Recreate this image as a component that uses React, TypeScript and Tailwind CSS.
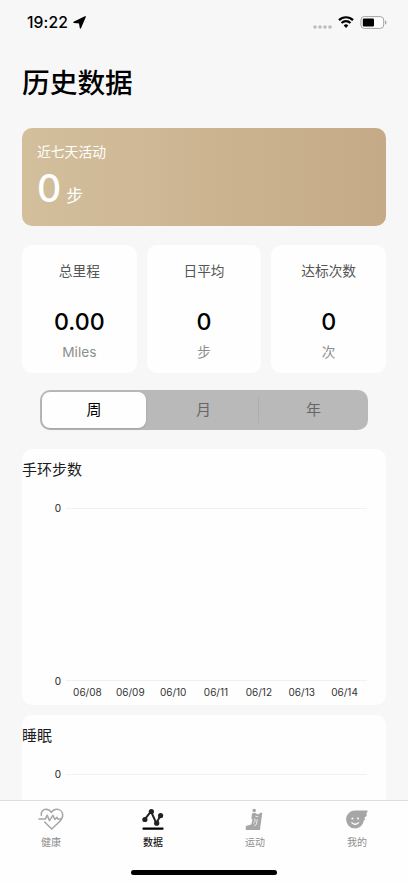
import React from "react";

const stats = [
  { label: "总里程", value: "0.00", unit: "Miles" },
  { label: "日平均", value: "0", unit: "步" },
  { label: "达标次数", value: "0", unit: "次" },
];

const days = ["06/08", "06/09", "06/10", "06/11", "06/12", "06/13", "06/14"];

const StatusBar: React.FC = () => (
  <header className="flex h-[46px] shrink-0 items-center justify-between pl-[27px] pr-[21px]">
    <div className="flex items-center gap-[5px]">
      <span className="text-[15.7px] leading-5 font-medium tracking-[0.1px]">19:22</span>
      <svg width="13" height="13" viewBox="0 0 13 13" className="-mt-[2px]">
        <path d="M12.2.8 7.4 12 6.6 6.9.9 6.3z" fill="#000" stroke="#000" strokeWidth="1.3" strokeLinejoin="round" />
      </svg>
    </div>
    <div className="flex items-center">
      <svg width="19" height="4" viewBox="0 0 19 4" className="mt-[7px] mr-[6px]" fill="#bdbdbd">
        <circle cx="2" cy="2" r="1.8" />
        <circle cx="7" cy="2" r="1.8" />
        <circle cx="12" cy="2" r="1.8" />
        <circle cx="17" cy="2" r="1.8" />
      </svg>
      <svg width="16" height="12" viewBox="0 0 16 12" fill="none" stroke="#000" className="-mt-[2px]">
        <path d="M1 4.1a10 10 0 0 1 14 0" strokeWidth="2.2" />
        <path d="M3.5 7a6.4 6.4 0 0 1 9 0" strokeWidth="2.1" />
        <path d="M8 11.9 5.7 9.4a3.3 3.3 0 0 1 4.6 0z" fill="#000" stroke="none" />
      </svg>
      <svg width="27" height="13" viewBox="0 0 27 13" className="-mt-[2px] ml-[6px]">
        <rect x=".9" y=".6" width="22.8" height="11.8" rx="3.4" fill="#fdfdfd" stroke="#a3a3a3" />
        <rect x="2.8" y="2.5" width="11.2" height="8" rx="1.2" fill="#000" />
        <path d="M25 4.3q3 2.2 0 4.4z" fill="#a3a3a3" />
      </svg>
    </div>
  </header>
);

const ChartCard: React.FC<{ title: string; labels?: string[] }> = ({ title, labels }) => (
  <section className="h-64 shrink-0 rounded-[10px] bg-[#fefefe]">
    <h2 className="pt-[10px] text-[15px] leading-[22px] text-[#1c1c1c]">{title}</h2>
    <div className="mt-[27px] flex h-[173px] pr-[19px]">
      <div className="-my-[6px] flex w-[39px] flex-col justify-between text-right text-[10px] leading-3 text-[#222]">
        <span>0</span>
        {labels && <span>0</span>}
      </div>
      <div className="ml-[5px] flex-1 border-y border-[#f1f1f1]" />
    </div>
    {labels && (
      <div className="mt-1 ml-[44px] grid w-[300px] grid-cols-7 text-center text-[10px] leading-[14px] text-[#333]">
        {labels.map((day) => (
          <span key={day}>{day}</span>
        ))}
      </div>
    )}
  </section>
);

const HealthIcon: React.FC = () => (
  <svg width="26" height="24" viewBox="0 0 26 24" fill="none" stroke="#a6a6a6" strokeWidth="1.5" strokeLinecap="round" strokeLinejoin="round">
    <path d="M3.4 8.3C2.7 4.8 5 2.3 8 2.3c2.1 0 3.9 1.1 5.3 3.1 1.3-2 3.2-3.1 5.4-3.1 3.4 0 6 2.5 6 6 0 2.5-1.3 4.5-3.5 6.7L13.7 22l-7-7" />
    <path d="M1 12.1h6.3l1.9-3.9 2.3 5.4 3.4-5.2 1.9 4.1 2.2-2.3.8 1.9h3.6" />
  </svg>
);

const DataIcon: React.FC = () => (
  <svg width="24" height="24" viewBox="0 0 24 24">
    <path d="M3.5 12.6 10 4.4l5.4 12 4-8" fill="none" stroke="#222" strokeWidth="2" />
    <g fill="#222">
      <circle cx="3.9" cy="12.5" r="2.6" />
      <circle cx="10.4" cy="4.6" r="2.6" />
      <circle cx="15.7" cy="16.2" r="2.6" />
      <circle cx="19.6" cy="8.6" r="2.6" />
    </g>
    <rect x="1.5" y="20.4" width="21" height="2.3" rx=".6" fill="#000" />
  </svg>
);

const SportIcon: React.FC = () => (
  <svg width="24" height="24" viewBox="0 0 24 24" fill="#a6a6a6">
    <circle cx="11.2" cy="3.5" r="1.8" />
    <path d="m8.9 6.6 3.1-.9 2.4 1.6 2.2-.4V5.8h2.7l-2.4 17.1H2.8V19l5.5-1.4 1.3-5.6-1.2.3z" />
    <path d="m12.3 9.2 2.9.6M10.2 16.4l1.9-1.8-.2-3M11.1 18.9l2.3-1.5.9-5.2" fill="none" stroke="#fefefe" strokeWidth=".8" />
  </svg>
);

const MineIcon: React.FC = () => (
  <svg width="24" height="24" viewBox="0 0 24 24">
    <path d="M10 3.6h11.7c.9 0 1.3.7.7 1.4l-.9 1.1.2 3-2 1.1.1 2.8-1 .6A8.9 8.9 0 1 1 10 3.6z" fill="#a6a6a6" />
    <circle cx="7.4" cy="11.6" r="1" fill="#fff" />
    <circle cx="13" cy="11.6" r="1" fill="#fff" />
    <path d="M6.8 15.6q3.4 3.3 6.8 0" fill="none" stroke="#fff" strokeWidth="1.2" strokeLinecap="round" />
  </svg>
);

const tabs = [
  { label: "健康", icon: <HealthIcon /> },
  { label: "数据", icon: <DataIcon />, active: true },
  { label: "运动", icon: <SportIcon /> },
  { label: "我的", icon: <MineIcon /> },
];

export default function App() {
  return (
    <div className="flex h-[883px] w-[408px] flex-col overflow-hidden bg-[#f7f7f7] font-['Inter','Noto_Sans_CJK_SC',sans-serif] text-black">
      <StatusBar />
      <main className="flex min-h-0 flex-1 flex-col overflow-hidden px-[22px]">
        <h1 className="mt-[17px] h-10 shrink-0 text-[27.7px] leading-10 font-medium">历史数据</h1>

        <section className="mt-[25px] h-[98px] shrink-0 rounded-[10px] bg-linear-to-r from-[#d3bf9c] to-[#c5aa87] px-[15px] pt-[14px] text-white">
          <p className="text-[13.8px] leading-5">近七天活动</p>
          <p className="mt-[6px] flex items-baseline gap-[5px] leading-[42px]">
            <span className="text-[37.5px] font-medium">0</span>
            <span className="text-[17px]">步</span>
          </p>
        </section>

        <section className="mt-[19px] grid h-32 shrink-0 grid-cols-3 gap-[10px] text-center">
          {stats.map((s) => (
            <div key={s.label} className="rounded-[10px] bg-[#fefefe] pt-4">
              <p className="text-[13.7px] leading-5 text-[#555]">{s.label}</p>
              <p className="mt-[26px] text-[23.2px] leading-[30px] font-medium">{s.value}</p>
              <p className="mt-[5px] text-[13.7px] leading-5 text-[#8e8e8e]">{s.unit}</p>
            </div>
          ))}
        </section>

        <div className="mx-[18px] mt-[17px] flex h-10 shrink-0 items-center rounded-[10px] bg-[#b9b9b9] p-[2px] text-center text-[15px] text-[#666]">
          <span className="h-9 w-[104px] rounded-[8px] bg-[#fefefe] leading-9 text-black shadow-sm">周</span>
          <span className="w-28 pl-[3px] leading-9">月</span>
          <span className="h-[26px] w-px bg-[#adadad]" />
          <span className="flex-1 pl-[2px] leading-9">年</span>
        </div>

        <div className="mt-[19px] flex flex-col gap-[10px]">
          <ChartCard title="手环步数" labels={days} />
          <ChartCard title="睡眠" />
        </div>
      </main>

      <nav className="h-[83px] shrink-0 border-t border-[#dedede] bg-[#fefefe]">
        <div className="grid h-[71px] grid-cols-4 pt-[6px]">
          {tabs.map((tab) => (
            <div key={tab.label} className="flex flex-col items-center">
              {tab.icon}
              <span
                className={
                  tab.active
                    ? "mt-[3px] text-[10px] leading-4 font-medium text-[#222]"
                    : "mt-[3px] text-[10px] leading-4 text-[#8f8f8f]"
                }
              >
                {tab.label}
              </span>
            </div>
          ))}
        </div>
        <div className="mx-auto -mt-[2px] h-[5px] w-[146px] rounded-full bg-black" />
      </nav>
    </div>
  );
}
